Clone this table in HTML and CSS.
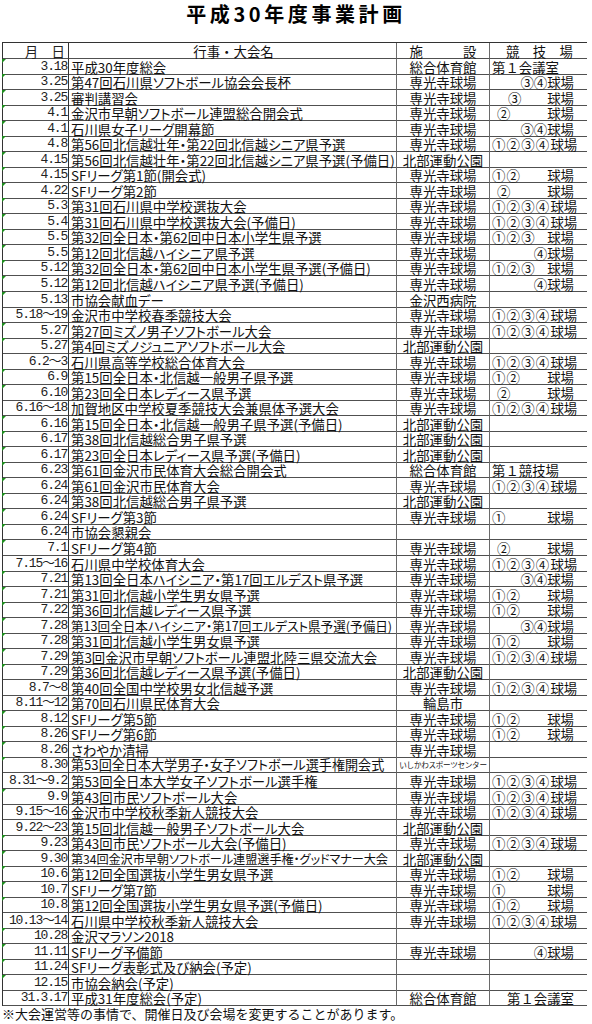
FILE: index.html
```html
<!DOCTYPE html>
<html lang="ja">
<head>
<meta charset="utf-8">
<title>平成30年度事業計画</title>
<link rel="stylesheet" href="styles.css">
</head>
<body>
<h1 class="title">平成30年度事業計画</h1>
<div class="sheet">
  <div class="r hd"><span class="d">月　日</span><span class="e ec">行事・大会名</span><span class="f">施　　　設</span><span class="v vc">競　技　場</span></div>
  <div class="r"><span class="d t">3.18</span><span class="e">平成30年度総会</span><span class="f">総合体育館</span><span class="v vl">第１会議室</span></div>
  <div class="r"><span class="d t">3.25</span><span class="e">第47回石川県ソフトボール協会会長杯</span><span class="f">専光寺球場</span><span class="v"><i></i>③④球場</span></div>
  <div class="r"><span class="d t">3.25</span><span class="e">審判講習会</span><span class="f">専光寺球場</span><span class="v"><i class="p3">③</i>球場</span></div>
  <div class="r"><span class="d t">4.1</span><span class="e">金沢市早朝ソフトボール連盟総合開会式</span><span class="f">専光寺球場</span><span class="v"><i class="p2">②</i>球場</span></div>
  <div class="r"><span class="d t">4.1</span><span class="e">石川県女子リーグ開幕節</span><span class="f">専光寺球場</span><span class="v"><i></i>③④球場</span></div>
  <div class="r"><span class="d t">4.8</span><span class="e">第56回北信越壮年・第22回北信越シニア県予選</span><span class="f">専光寺球場</span><span class="v"><i>①②③④</i>球場</span></div>
  <div class="r"><span class="d t">4.15</span><span class="e">第56回北信越壮年・第22回北信越シニア県予選(予備日)</span><span class="f">北部運動公園</span><span class="v"></span></div>
  <div class="r"><span class="d t">4.15</span><span class="e">SFリーグ第1節(開会式)</span><span class="f">専光寺球場</span><span class="v"><i>①②</i>球場</span></div>
  <div class="r"><span class="d t">4.22</span><span class="e">SFリーグ第2節</span><span class="f">専光寺球場</span><span class="v"><i class="p2">②</i>球場</span></div>
  <div class="r"><span class="d t">5.3</span><span class="e">第31回石川県中学校選抜大会</span><span class="f">専光寺球場</span><span class="v"><i>①②③④</i>球場</span></div>
  <div class="r"><span class="d t">5.4</span><span class="e">第31回石川県中学校選抜大会(予備日)</span><span class="f">専光寺球場</span><span class="v"><i>①②③④</i>球場</span></div>
  <div class="r"><span class="d t">5.5</span><span class="e">第32回全日本・第62回中日本小学生県予選</span><span class="f">専光寺球場</span><span class="v"><i>①②③</i>球場</span></div>
  <div class="r"><span class="d t">5.5</span><span class="e">第12回北信越ハイシニア県予選</span><span class="f">専光寺球場</span><span class="v"><i></i>④球場</span></div>
  <div class="r"><span class="d t">5.12</span><span class="e">第32回全日本・第62回中日本小学生県予選(予備日)</span><span class="f">専光寺球場</span><span class="v"><i>①②③</i>球場</span></div>
  <div class="r"><span class="d t">5.12</span><span class="e">第12回北信越ハイシニア県予選(予備日)</span><span class="f">専光寺球場</span><span class="v"><i></i>④球場</span></div>
  <div class="r"><span class="d t">5.13</span><span class="e">市協会献血デー</span><span class="f">金沢西病院</span><span class="v"></span></div>
  <div class="r"><span class="d">5.18～19</span><span class="e">金沢市中学校春季競技大会</span><span class="f">専光寺球場</span><span class="v"><i>①②③④</i>球場</span></div>
  <div class="r"><span class="d t">5.27</span><span class="e">第27回ミズノ男子ソフトボール大会</span><span class="f">専光寺球場</span><span class="v"><i>①②③④</i>球場</span></div>
  <div class="r"><span class="d t">5.27</span><span class="e">第4回ミズノジュニアソフトボール大会</span><span class="f">北部運動公園</span><span class="v"></span></div>
  <div class="r"><span class="d">6.2～3</span><span class="e">石川県高等学校総合体育大会</span><span class="f">専光寺球場</span><span class="v"><i>①②③④</i>球場</span></div>
  <div class="r"><span class="d t">6.9</span><span class="e">第15回全日本・北信越一般男子県予選</span><span class="f">専光寺球場</span><span class="v"><i>①②</i>球場</span></div>
  <div class="r"><span class="d t">6.10</span><span class="e">第23回全日本レディース県予選</span><span class="f">専光寺球場</span><span class="v"><i class="p2">②</i>球場</span></div>
  <div class="r"><span class="d">6.16～18</span><span class="e">加賀地区中学校夏季競技大会兼県体予選大会</span><span class="f">専光寺球場</span><span class="v"><i>①②③④</i>球場</span></div>
  <div class="r"><span class="d t">6.16</span><span class="e">第15回全日本・北信越一般男子県予選(予備日)</span><span class="f">北部運動公園</span><span class="v"></span></div>
  <div class="r"><span class="d t">6.17</span><span class="e">第38回北信越総合男子県予選</span><span class="f">北部運動公園</span><span class="v"></span></div>
  <div class="r"><span class="d t">6.17</span><span class="e">第23回全日本レディース県予選(予備日)</span><span class="f">北部運動公園</span><span class="v"></span></div>
  <div class="r"><span class="d t">6.23</span><span class="e">第61回金沢市民体育大会総合開会式</span><span class="f">総合体育館</span><span class="v vl">第１競技場</span></div>
  <div class="r"><span class="d t">6.24</span><span class="e">第61回金沢市民体育大会</span><span class="f">専光寺球場</span><span class="v"><i>①②③④</i>球場</span></div>
  <div class="r"><span class="d t">6.24</span><span class="e">第38回北信越総合男子県予選</span><span class="f">北部運動公園</span><span class="v"></span></div>
  <div class="r"><span class="d t">6.24</span><span class="e">SFリーグ第3節</span><span class="f">専光寺球場</span><span class="v"><i>①</i>球場</span></div>
  <div class="r"><span class="d t">6.24</span><span class="e">市協会懇親会</span><span class="f"></span><span class="v"></span></div>
  <div class="r"><span class="d t">7.1</span><span class="e">SFリーグ第4節</span><span class="f">専光寺球場</span><span class="v"><i class="p2">②</i>球場</span></div>
  <div class="r"><span class="d">7.15～16</span><span class="e">石川県中学校体育大会</span><span class="f">専光寺球場</span><span class="v"><i>①②③④</i>球場</span></div>
  <div class="r"><span class="d t">7.21</span><span class="e">第13回全日本ハイシニア・第17回エルデスト県予選</span><span class="f">専光寺球場</span><span class="v"><i></i>③④球場</span></div>
  <div class="r"><span class="d t">7.21</span><span class="e">第31回北信越小学生男女県予選</span><span class="f">専光寺球場</span><span class="v"><i>①②</i>球場</span></div>
  <div class="r"><span class="d t">7.22</span><span class="e">第36回北信越レディース県予選</span><span class="f">専光寺球場</span><span class="v"><i>①②</i>球場</span></div>
  <div class="r"><span class="d t">7.28</span><span class="e es">第13回全日本ハイシニア・第17回エルデスト県予選(予備日)</span><span class="f">専光寺球場</span><span class="v"><i></i>③④球場</span></div>
  <div class="r"><span class="d t">7.28</span><span class="e">第31回北信越小学生男女県予選</span><span class="f">専光寺球場</span><span class="v"><i>①②</i>球場</span></div>
  <div class="r"><span class="d t">7.29</span><span class="e">第3回金沢市早朝ソフトボール連盟北陸三県交流大会</span><span class="f">専光寺球場</span><span class="v"><i>①②③④</i>球場</span></div>
  <div class="r"><span class="d t">7.29</span><span class="e">第36回北信越レディース県予選(予備日)</span><span class="f">北部運動公園</span><span class="v"></span></div>
  <div class="r"><span class="d">8.7～8</span><span class="e">第40回全国中学校男女北信越予選</span><span class="f">専光寺球場</span><span class="v"><i>①②③④</i>球場</span></div>
  <div class="r"><span class="d">8.11～12</span><span class="e">第70回石川県民体育大会</span><span class="f">輪島市</span><span class="v"></span></div>
  <div class="r"><span class="d t">8.12</span><span class="e">SFリーグ第5節</span><span class="f">専光寺球場</span><span class="v"><i>①②</i>球場</span></div>
  <div class="r"><span class="d t">8.26</span><span class="e">SFリーグ第6節</span><span class="f">専光寺球場</span><span class="v"><i>①②</i>球場</span></div>
  <div class="r"><span class="d t">8.26</span><span class="e">さわやか清掃</span><span class="f">専光寺球場</span><span class="v"></span></div>
  <div class="r"><span class="d t">8.30</span><span class="e es3">第53回全日本大学男子・女子ソフトボール選手権開会式</span><span class="f fs">いしかわスポーツセンター</span><span class="v"></span></div>
  <div class="r"><span class="d">8.31～9.2</span><span class="e">第53回全日本大学女子ソフトボール選手権</span><span class="f">専光寺球場</span><span class="v"><i>①②③④</i>球場</span></div>
  <div class="r"><span class="d t">9.9</span><span class="e">第43回市民ソフトボール大会</span><span class="f">専光寺球場</span><span class="v"><i>①②③④</i>球場</span></div>
  <div class="r"><span class="d">9.15～16</span><span class="e">金沢市中学校秋季新人競技大会</span><span class="f">専光寺球場</span><span class="v"><i>①②③④</i>球場</span></div>
  <div class="r"><span class="d">9.22～23</span><span class="e">第15回北信越一般男子ソフトボール大会</span><span class="f">北部運動公園</span><span class="v"></span></div>
  <div class="r"><span class="d t">9.23</span><span class="e">第43回市民ソフトボール大会(予備日)</span><span class="f">専光寺球場</span><span class="v"><i>①②③④</i>球場</span></div>
  <div class="r"><span class="d t">9.30</span><span class="e es2">第34回金沢市早朝ソフトボール連盟選手権・グッドマナー大会</span><span class="f">北部運動公園</span><span class="v"></span></div>
  <div class="r"><span class="d t">10.6</span><span class="e">第12回全国選抜小学生男女県予選</span><span class="f">専光寺球場</span><span class="v"><i>①②</i>球場</span></div>
  <div class="r"><span class="d t">10.7</span><span class="e">SFリーグ第7節</span><span class="f">専光寺球場</span><span class="v"><i>①</i>球場</span></div>
  <div class="r"><span class="d t">10.8</span><span class="e">第12回全国選抜小学生男女県予選(予備日)</span><span class="f">専光寺球場</span><span class="v"><i>①②</i>球場</span></div>
  <div class="r"><span class="d">10.13～14</span><span class="e">石川県中学校秋季新人競技大会</span><span class="f">専光寺球場</span><span class="v"><i>①②③④</i>球場</span></div>
  <div class="r"><span class="d t">10.28</span><span class="e">金沢マラソン2018</span><span class="f"></span><span class="v"></span></div>
  <div class="r"><span class="d t">11.11</span><span class="e">SFリーグ予備節</span><span class="f">専光寺球場</span><span class="v"><i></i>④球場</span></div>
  <div class="r"><span class="d t">11.24</span><span class="e">SFリーグ表彰式及び納会(予定)</span><span class="f"></span><span class="v"></span></div>
  <div class="r"><span class="d t">12.15</span><span class="e">市協会納会(予定)</span><span class="f"></span><span class="v"></span></div>
  <div class="r"><span class="d">31.3.17</span><span class="e">平成31年度総会(予定)</span><span class="f">総合体育館</span><span class="v"><i></i>第１会議室</span></div>
</div>
<p class="note">※大会運営等の事情で、開催日及び会場を変更することがあります。</p>
</body>
</html>
```

FILE: styles.css
```css
html, body {
  margin: 0;
  padding: 0;
  background: #fff;
  color: #111;
  font-family: "Noto Sans CJK JP", sans-serif;
}

.title {
  margin: 0;
  height: 42px;
  font-size: 20px;
  font-weight: 700;
  line-height: 28px;
  letter-spacing: 3.6px;
  text-align: center;
  color: #000;
}

.sheet {
  margin-left: 2px;
  width: 585px;
  border-top: 1px solid #333;
  border-left: 1px solid #333;
  box-sizing: border-box;
}

.r {
  display: grid;
  grid-template-columns: 66px 328px 93px 97px;
  height: 15.54px;
  font-size: 13.4px;
  line-height: 14px;
}

.r > span {
  box-sizing: border-box;
  border-bottom: 1px solid #505050;
  padding-top: 1px;
  white-space: nowrap;
  position: relative;
}

.d {
  font-family: "Liberation Mono", "Noto Sans CJK JP", monospace;
  font-size: 13px;
  letter-spacing: -1.2px;
  text-align: right;
  padding-right: 1px;
  border-right: 1px solid #333;
  color: #222;
}

.hd .d {
  font-family: "Noto Sans CJK JP", sans-serif;
  font-size: 13.4px;
  letter-spacing: 0;
  padding-right: 3px;
}

.t::before {
  content: "";
  position: absolute;
  left: -1px;
  top: 0;
  border-top: 4px solid #1e8c1e;
  border-right: 4px solid transparent;
}

.e {
  padding-left: 2px;
  border-right: 1px solid #6a6a6a;
  font-feature-settings: "palt" 1;
}

.ec {
  text-align: center;
  font-feature-settings: normal;
}

.es {
  font-size: 12.6px;
}

.es2 {
  font-size: 12.2px;
  letter-spacing: -0.1px;
}

.es3 {
  font-size: 13.1px;
}

.f {
  text-align: center;
  border-right: 1px solid #6a6a6a;
}

.fs {
  font-size: 7.6px;
  letter-spacing: -0.3px;
}

.v {
  display: flex;
  justify-content: space-between;
  padding-left: 2px;
  padding-right: 13px;
}

.v i {
  font-style: normal;
  letter-spacing: 1.2px;
}

.v .p2 {
  padding-left: 5px;
}

.v .p3 {
  padding-left: 16px;
}

.vl {
  display: block;
}

.vc {
  display: block;
  text-align: center;
  padding-right: 0;
}

.note {
  margin: 0;
  padding-left: 2px;
  font-size: 13px;
  line-height: 16px;
  padding-top: 0;
}
```
